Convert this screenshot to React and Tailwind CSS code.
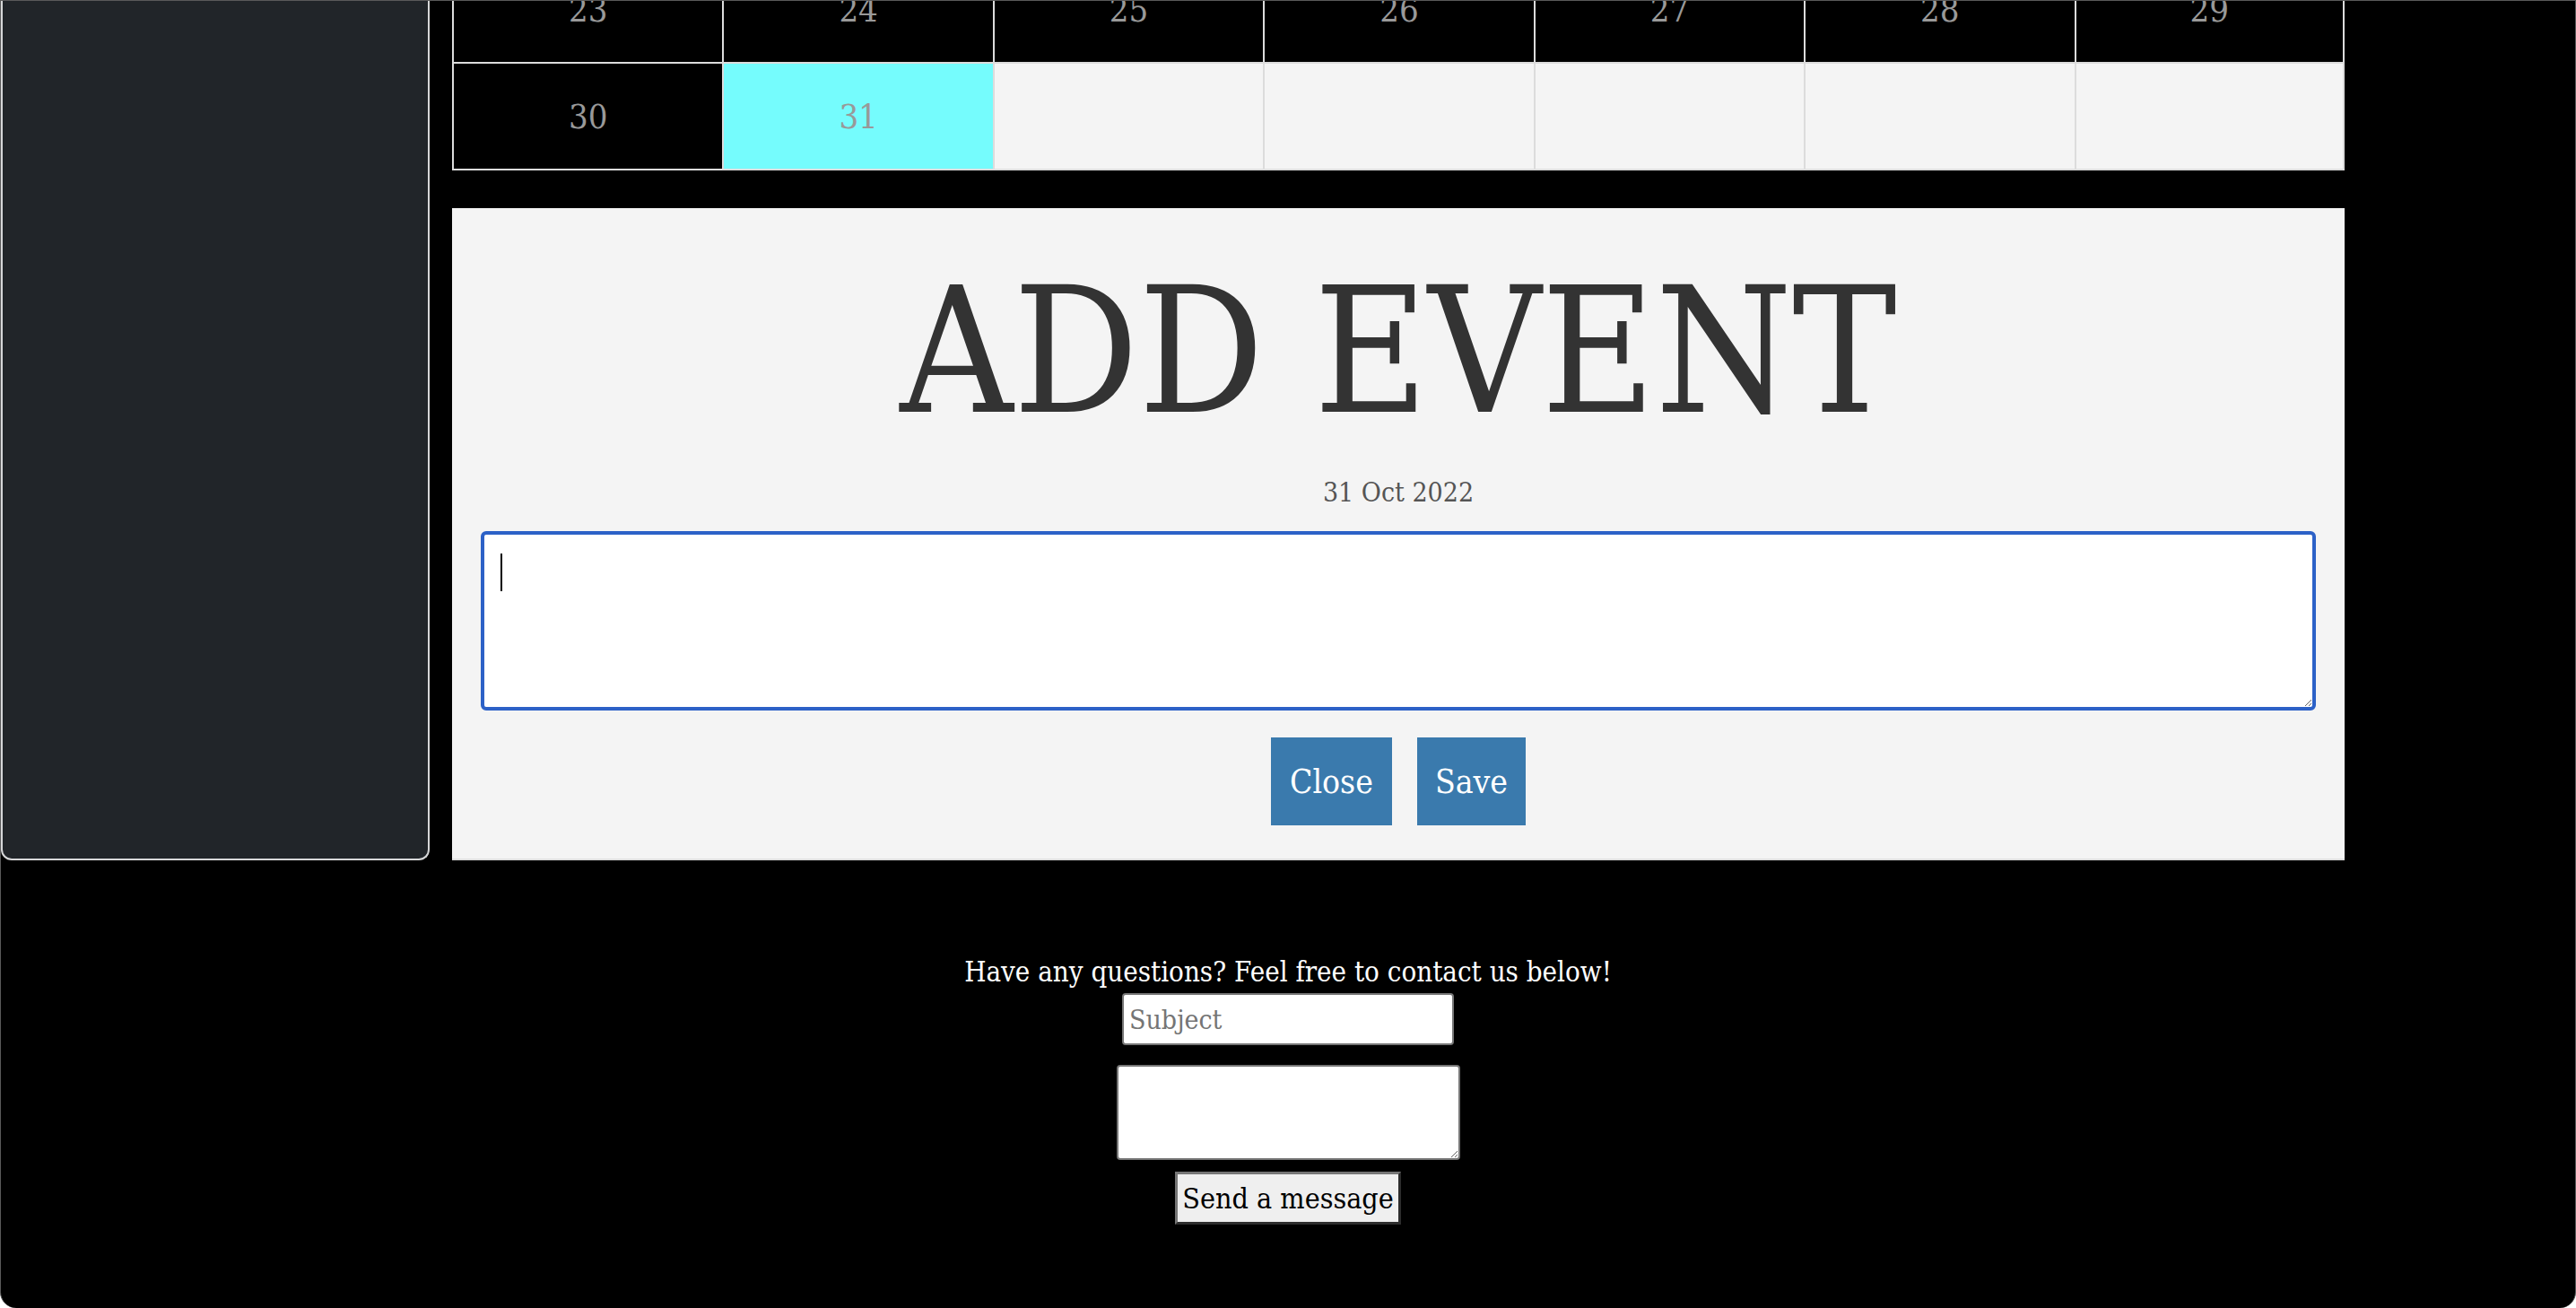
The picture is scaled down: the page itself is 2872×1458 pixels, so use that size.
import React from 'react';

const days = [
  { n: 23, kind: 'past' },
  { n: 24, kind: 'past' },
  { n: 25, kind: 'past' },
  { n: 26, kind: 'past' },
  { n: 27, kind: 'past' },
  { n: 28, kind: 'past' },
  { n: 29, kind: 'past' },
  { n: 30, kind: 'past' },
  { n: 31, kind: 'today' },
  { n: null, kind: 'empty' },
  { n: null, kind: 'empty' },
  { n: null, kind: 'empty' },
  { n: null, kind: 'empty' },
  { n: null, kind: 'empty' },
];

function DayCell({ day, last }) {
  const bg =
    day.kind === 'today' ? 'bg-[#75fcfd]' : day.kind === 'empty' ? 'bg-[#f4f4f4]' : 'bg-black';
  return (
    <div
      className={`${bg} h-[119px] border-l-2 border-b-2 border-[#dcdcdc] ${last ? 'border-r-2' : ''} flex items-center justify-center text-[38px] leading-none text-[#999999]`}
    >
      {day.n}
    </div>
  );
}

export default function App() {
  return (
    <div className="w-[2872px] h-[1458px] overflow-hidden bg-black border-t border-x border-[#5a5a5a] rounded-b-[18px] font-['DejaVu_Serif_Condensed','DejaVu_Serif',serif] [font-stretch:condensed]">
      <div className="flex items-stretch">
        {/* Sidebar */}
        <div className="w-[478px] shrink-0 bg-[#212529] border-x-2 border-b-2 border-[#d6d7d8] rounded-b-[12px]" />

        {/* Main column */}
        <div className="ml-[25px] w-[2110px] flex flex-col">
          {/* Calendar (scrolled) */}
          <div className="-mt-[49px] grid grid-cols-7">
            {days.map((d, i) => (
              <DayCell key={i} day={d} last={i % 7 === 6} />
            ))}
          </div>

          {/* Add event panel */}
          <div className="mt-[42px] bg-[#f4f4f4] border-b-2 border-[#dddddd] px-[32px] pt-[63px] pb-[37px] flex flex-col items-center">
            <h1 className="text-[194px] leading-none text-[#333333] font-normal">ADD EVENT</h1>
            <p className="mt-[42px] text-[30px] leading-[36px] text-[#555555]">31 Oct 2022</p>
            <div className="relative mt-[25px] w-full">
              <textarea
                className="block w-full h-[200px] bg-white border-4 border-[#2c61c7] rounded-[6px] outline-none caret-transparent p-3 text-[30px]"
              />
              <div className="absolute left-[22px] top-[25px] w-[2px] h-[42px] bg-black" />
            </div>
            <div className="mt-[30px] flex gap-[28px]">
              <button className="h-[98px] px-[21px] bg-[#3a7aad] text-white text-[37px] leading-none">Close</button>
              <button className="h-[98px] px-[20px] bg-[#3a7aad] text-white text-[37px] leading-none">Save</button>
            </div>
          </div>
        </div>
      </div>

      {/* Contact footer */}
      <div className="mt-[100px] flex flex-col items-center">
        <p className="text-[31px] leading-[48px] text-white">Have any questions? Feel free to contact us below!</p>
        <input
          placeholder="Subject"
          className="w-[370px] h-[58px] bg-white border-2 border-[#767676] rounded-[4px] px-[6px] text-[30px] text-black placeholder:text-[#757575]"
        />
        <textarea className="mt-[22px] w-[383px] h-[106px] bg-white border-2 border-[#767676] rounded-[4px]" />
        <button className="mt-[13px] w-[252px] h-[59px] bg-[#efefef] border-[3px] border-t-[#767676] border-l-[#767676] border-r-[#2d2d2d] border-b-[#2d2d2d] text-[32px] leading-none text-black">
          Send a message
        </button>
      </div>
    </div>
  );
}
